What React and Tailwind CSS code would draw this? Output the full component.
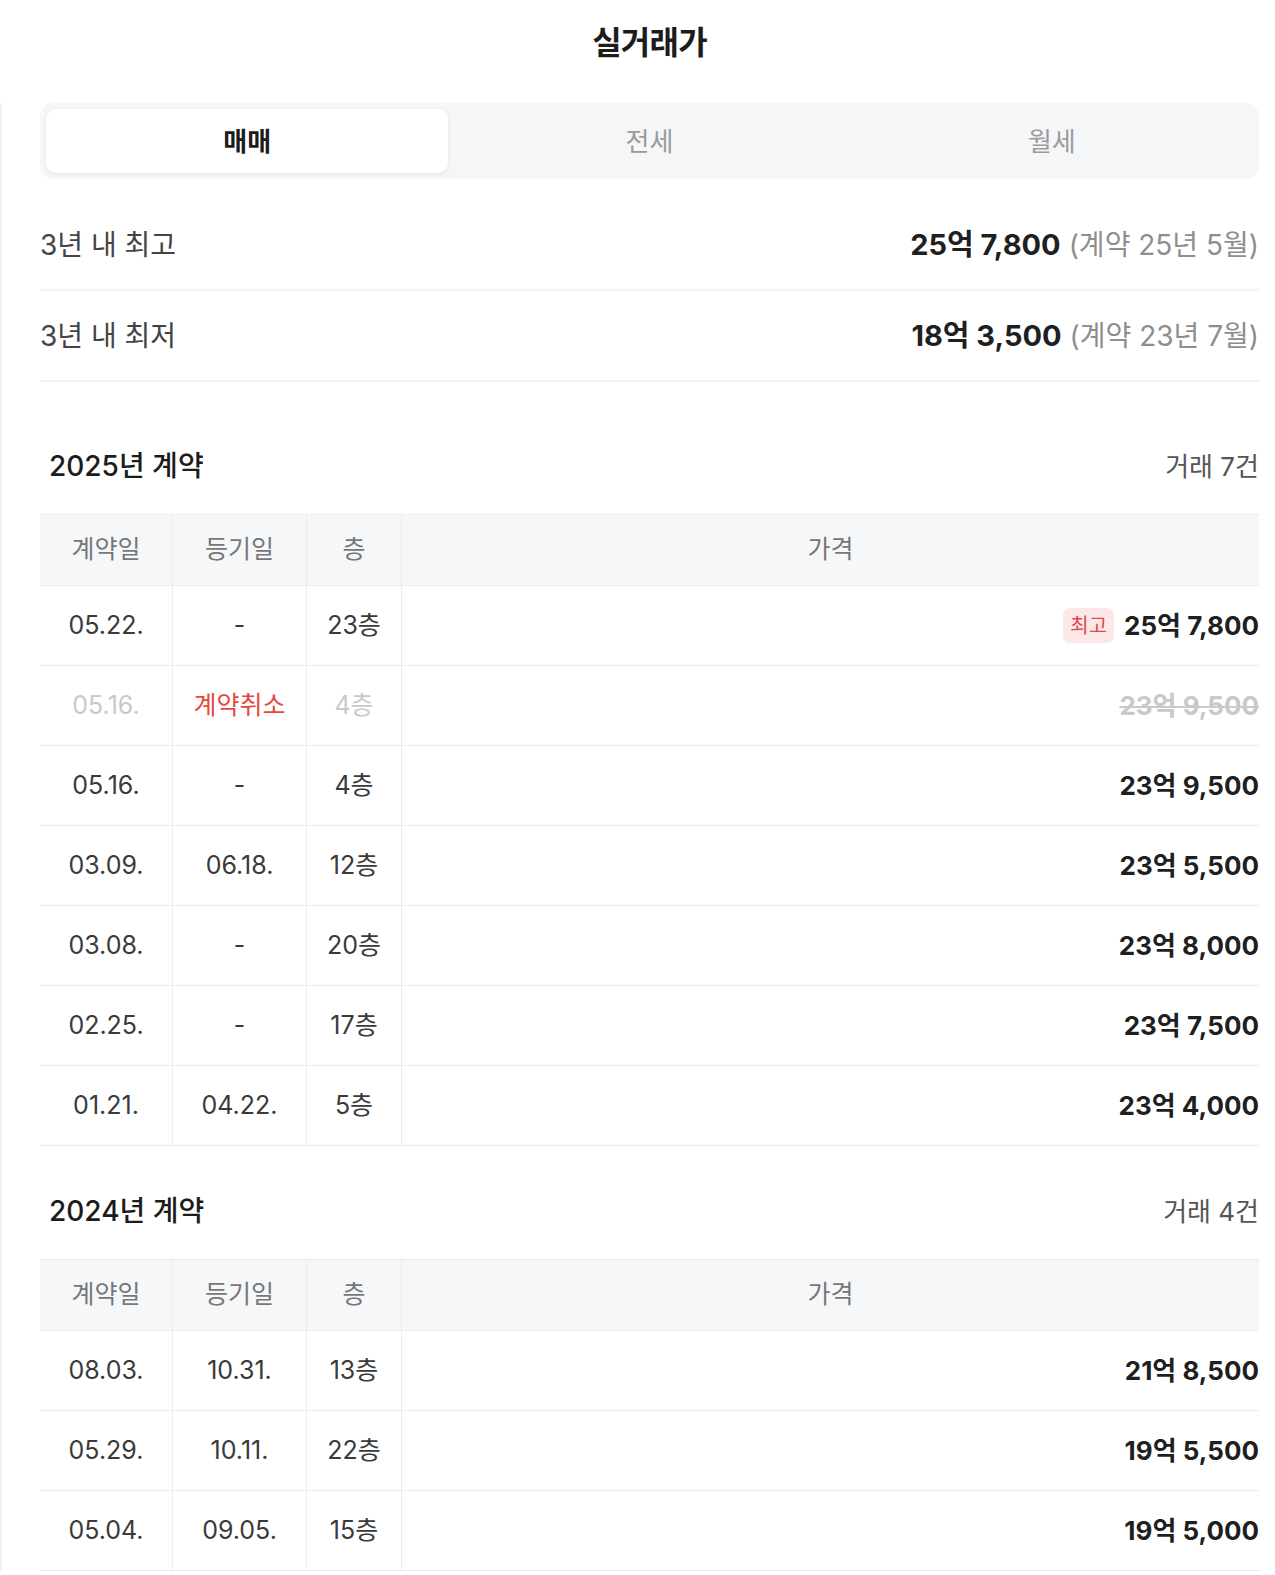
import { useState } from 'react'

const tabs = ['매매', '전세', '월세']

const sections = [
  {
    year: '2025년 계약',
    count: '거래 7건',
    rows: [
      { date: '05.22.', reg: '-', floor: '23층', price: '25억 7,800', best: true },
      { date: '05.16.', reg: '계약취소', floor: '4층', price: '23억 9,500', cancelled: true },
      { date: '05.16.', reg: '-', floor: '4층', price: '23억 9,500' },
      { date: '03.09.', reg: '06.18.', floor: '12층', price: '23억 5,500' },
      { date: '03.08.', reg: '-', floor: '20층', price: '23억 8,000' },
      { date: '02.25.', reg: '-', floor: '17층', price: '23억 7,500' },
      { date: '01.21.', reg: '04.22.', floor: '5층', price: '23억 4,000' },
    ],
  },
  {
    year: '2024년 계약',
    count: '거래 4건',
    rows: [
      { date: '08.03.', reg: '10.31.', floor: '13층', price: '21억 8,500' },
      { date: '05.29.', reg: '10.11.', floor: '22층', price: '19억 5,500' },
      { date: '05.04.', reg: '09.05.', floor: '15층', price: '19억 5,000' },
    ],
  },
]

function DealTable({ rows }) {
  return (
    <div className="w-full">
      {/* Header */}
      <div className="flex h-[72px] bg-[#f6f7f9] border-t border-b border-[#ececee] text-[25px] text-[#777]">
        <div className="w-[133px] flex items-center justify-center border-r border-[#ececee]">계약일</div>
        <div className="w-[134px] flex items-center justify-center border-r border-[#ececee]">등기일</div>
        <div className="w-[95px] flex items-center justify-center border-r border-[#ececee]">층</div>
        <div className="flex-1 flex items-center justify-center">가격</div>
      </div>
      {rows.map((r, i) => (
        <div key={i} className="flex h-[80px] border-b border-[#ececee] text-[25px] text-[#3a3a3a]">
          <div className={`w-[133px] flex items-center justify-center border-r border-[#ececee] ${r.cancelled ? 'text-[#c9c9c9]' : ''}`}>
            {r.date}
          </div>
          <div className={`w-[134px] flex items-center justify-center border-r border-[#ececee] ${r.cancelled ? 'text-[#e8463f]' : ''}`}>
            {r.reg}
          </div>
          <div className={`w-[95px] flex items-center justify-center border-r border-[#ececee] ${r.cancelled ? 'text-[#c9c9c9]' : ''}`}>
            {r.floor}
          </div>
          <div className="flex-1 flex items-center justify-end gap-[10px]">
            {r.best && (
              <span className="h-[35px] px-[7px] rounded-[7px] bg-[#fde8e9] text-[#e2474b] text-[20px] flex items-center">최고</span>
            )}
            <span
              className={`text-[26px] font-bold ${
                r.cancelled ? 'text-[#c9c9c9] line-through decoration-2' : 'text-[#1f1f1f]'
              }`}
            >
              {r.price}
            </span>
          </div>
        </div>
      ))}
    </div>
  )
}

export default function App() {
  const [activeTab, setActiveTab] = useState(0)

  return (
    <div className="w-[1275px] bg-white [font-family:Inter,'Noto_Sans_CJK_KR',sans-serif]">
      {/* Title */}
      <div className="h-[97px] pb-[12px] pl-[24px] flex items-center justify-center">
        <h1 className="text-[32px] font-bold text-[#1c1c1c] tracking-tight">실거래가</h1>
      </div>

      <div className="border-l-2 border-[#f2f2f3] pl-[38px] pr-[16px]">
        {/* Tabs */}
        <div className="mt-[6px] h-[76px] p-[6px] bg-[#f5f6f8] rounded-[14px] flex">
          {tabs.map((t, i) => (
            <button
              key={t}
              onClick={() => setActiveTab(i)}
              className={`flex-1 flex items-center justify-center rounded-[10px] text-[26px] ${
                activeTab === i
                  ? 'bg-white font-bold text-[#1c1c1c] shadow-[0_1px_4px_rgba(0,0,0,0.08)]'
                  : 'text-[#9b9b9b]'
              }`}
            >
              {t}
            </button>
          ))}
        </div>

        {/* Summary */}
        <div className="mt-[21px]">
          <div className="h-[91px] flex items-center justify-between border-b-2 border-[#f3f3f4]">
            <span className="text-[28px] text-[#444]">3년 내 최고</span>
            <span className="flex items-baseline gap-[8px]">
              <span className="text-[29px] font-bold text-[#1f1f1f]">25억 7,800</span>
              <span className="text-[28px] text-[#8e8e8e]">(계약 25년 5월)</span>
            </span>
          </div>
          <div className="h-[91px] flex items-center justify-between border-b-2 border-[#f3f3f4]">
            <span className="text-[28px] text-[#444]">3년 내 최저</span>
            <span className="flex items-baseline gap-[8px]">
              <span className="text-[29px] font-bold text-[#1f1f1f]">18억 3,500</span>
              <span className="text-[28px] text-[#8e8e8e]">(계약 23년 7월)</span>
            </span>
          </div>
        </div>

        {/* Yearly sections */}
        <div className="mt-[19px]">
          {sections.map((s) => (
            <section key={s.year} className="pt-[43px]">
              <div className="h-[44px] mb-[26px] flex items-center justify-between">
                <h2 className="pl-[9px] text-[28px] font-medium text-[#1c1c1c]">{s.year}</h2>
                <span className="text-[26px] text-[#555]">{s.count}</span>
              </div>
              <DealTable rows={s.rows} />
            </section>
          ))}
        </div>
      </div>
    </div>
  )
}
